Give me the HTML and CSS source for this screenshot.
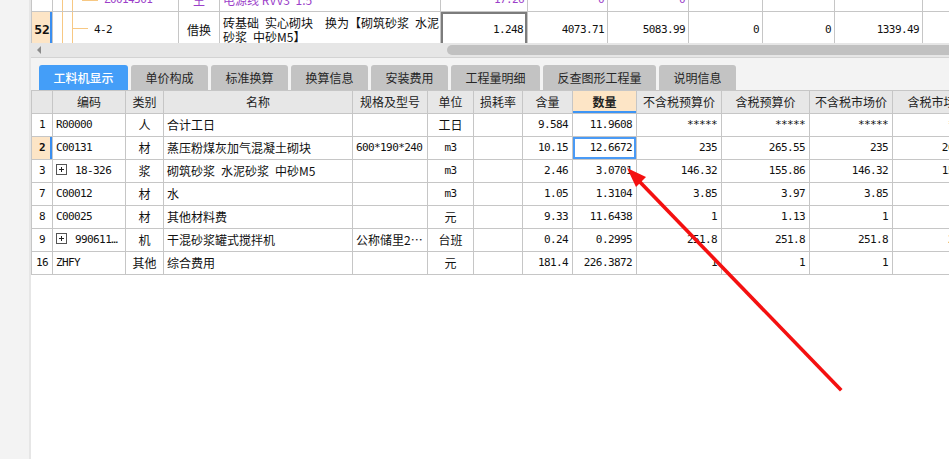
FILE: index.html
```html
<!DOCTYPE html>
<html lang="zh-CN">
<head>
<meta charset="utf-8">
<title>工料机显示</title>
<link rel="stylesheet" href="styles.css">
</head>
<body>
<div class="gutter"></div>
<div class="main">
  <div class="upper">
    <table class="utable">
      <colgroup>
        <col class="w22"><col class="w126"><col class="w41"><col class="w221"><col class="w87"><col class="w80"><col class="w81"><col class="w74"><col class="w72"><col class="w88"><col class="w60">
      </colgroup>
      <tr class="row-a">
        <td class="rn"></td>
        <td class="tree tree-a mono">Z0014301</td>
        <td class="c">主</td>
        <td class="l">电源线 RVV3*1.5</td>
        <td class="r mono">17.26</td>
        <td class="r mono">0</td>
        <td class="r mono">0</td>
        <td></td><td></td><td></td><td></td>
      </tr>
      <tr class="row-b">
        <td class="rn cur">52</td>
        <td class="tree tree-b mono">4-2</td>
        <td class="c">借换</td>
        <td class="l name2"><div class="nl">砖基础&ensp;实心砌块&ensp;&ensp;换为【砌筑砂浆&ensp;水泥</div><div class="nl">砂浆&ensp;中砂M5】</div></td>
        <td class="r mono edit">1.248</td>
        <td class="r mono">4073.71</td>
        <td class="r mono">5083.99</td>
        <td class="r mono">0</td>
        <td class="r mono">0</td>
        <td class="r mono">1339.49</td>
        <td></td>
      </tr>
    </table>
  </div>
  <div class="hscroll">
    <span class="sarrow"></span>
    <span class="thumb"></span>
  </div>
  <div class="tabbar">
    <div class="tab active">工料机显示</div>
    <div class="tab">单价构成</div>
    <div class="tab">标准换算</div>
    <div class="tab">换算信息</div>
    <div class="tab">安装费用</div>
    <div class="tab">工程量明细</div>
    <div class="tab">反查图形工程量</div>
    <div class="tab">说明信息</div>
  </div>
  <div class="gridwrap">
    <table class="grid">
      <colgroup>
        <col class="w22"><col class="w73"><col class="w38"><col class="w189"><col class="w75"><col class="w46"><col class="w49"><col class="w50"><col class="w64"><col class="w85"><col class="w88"><col class="w84"><col class="w90">
      </colgroup>
      <tr class="head">
        <th class="rn"></th>
        <th>编码</th>
        <th>类别</th>
        <th>名称</th>
        <th>规格及型号</th>
        <th>单位</th>
        <th>损耗率</th>
        <th>含量</th>
        <th class="hl">数量</th>
        <th>不含税预算价</th>
        <th>含税预算价</th>
        <th>不含税市场价</th>
        <th>含税市场价</th>
      </tr>
      <tr>
        <td class="rn mono">1</td><td class="mono l">R00000</td><td class="c">人</td><td class="l">合计工日</td><td></td><td class="c">工日</td><td></td>
        <td class="r mono">9.584</td><td class="r mono">11.9608</td><td class="r mono">*****</td><td class="r mono">*****</td><td class="r mono">*****</td><td class="r mono">*****</td>
      </tr>
      <tr>
        <td class="rn cur mono">2</td><td class="mono l">C00131</td><td class="c">材</td><td class="l">蒸压粉煤灰加气混凝土砌块</td><td class="mono l">600*190*240</td><td class="c mono">m3</td><td></td>
        <td class="r mono">10.15</td><td class="r mono sel">12.6672</td><td class="r mono">235</td><td class="r mono">265.55</td><td class="r mono">235</td><td class="r mono">265.55</td>
      </tr>
      <tr>
        <td class="rn mono">3</td><td class="mono l"><svg class="exp" width="11" height="11" viewBox="0 0 11 11"><rect x="0.5" y="0.5" width="10" height="10" fill="#fff" stroke="#555"/><path d="M3 5.5H8M5.5 3V8" stroke="#222"/></svg> 18-326</td><td class="c">浆</td><td class="l">砌筑砂浆&ensp;水泥砂浆&ensp;中砂M5</td><td></td><td class="c mono">m3</td><td></td>
        <td class="r mono">2.46</td><td class="r mono">3.0701</td><td class="r mono">146.32</td><td class="r mono">155.86</td><td class="r mono">146.32</td><td class="r mono">155.86</td>
      </tr>
      <tr>
        <td class="rn mono">7</td><td class="mono l">C00012</td><td class="c">材</td><td class="l">水</td><td></td><td class="c mono">m3</td><td></td>
        <td class="r mono">1.05</td><td class="r mono">1.3104</td><td class="r mono">3.85</td><td class="r mono">3.97</td><td class="r mono">3.85</td><td class="r mono">3.97</td>
      </tr>
      <tr>
        <td class="rn mono">8</td><td class="mono l">C00025</td><td class="c">材</td><td class="l">其他材料费</td><td></td><td class="c">元</td><td></td>
        <td class="r mono">9.33</td><td class="r mono">11.6438</td><td class="r mono">1</td><td class="r mono">1.13</td><td class="r mono">1</td><td class="r mono">1.13</td>
      </tr>
      <tr>
        <td class="rn mono">9</td><td class="mono l"><svg class="exp" width="11" height="11" viewBox="0 0 11 11"><rect x="0.5" y="0.5" width="10" height="10" fill="#fff" stroke="#555"/><path d="M3 5.5H8M5.5 3V8" stroke="#222"/></svg> 990611…</td><td class="c">机</td><td class="l">干混砂浆罐式搅拌机</td><td class="l">公称储里2…</td><td class="c">台班</td><td></td>
        <td class="r mono">0.24</td><td class="r mono">0.2995</td><td class="r mono">251.8</td><td class="r mono">251.8</td><td class="r mono">251.8</td><td class="r mono">251.8</td>
      </tr>
      <tr>
        <td class="rn mono">16</td><td class="mono l">ZHFY</td><td class="c">其他</td><td class="l">综合费用</td><td></td><td class="c">元</td><td></td>
        <td class="r mono">181.4</td><td class="r mono">226.3872</td><td class="r mono">1</td><td class="r mono">1</td><td class="r mono">1</td><td class="r mono">1</td>
      </tr>
    </table>
  </div>
</div>
<svg class="arrow" width="949" height="459" viewBox="0 0 949 459">
  <line x1="639" y1="181" x2="840" y2="389" stroke="#f41010" stroke-width="3.6" stroke-linecap="square"/>
  <polygon points="627,168 646,177 636,187" fill="#f41010"/>
</svg>
</body>
</html>
```
FILE: styles.css
```css
html, body {
  margin: 0;
  padding: 0;
}
body {
  width: 949px;
  height: 459px;
  overflow: hidden;
  display: flex;
  position: relative;
  background: #fff;
  font-family: "Noto Sans CJK SC", "Noto Sans", sans-serif;
  font-size: 12px;
  color: #111;
}
.gutter {
  width: 29px;
  flex: none;
  background: #f3f3f3;
  border-right: 2px solid #e6e6e6;
}
.main {
  flex: 1;
  min-width: 0;
  overflow: hidden;
  display: flex;
  flex-direction: column;
}

/* shared table */
table {
  border-collapse: separate;
  border-spacing: 0;
  table-layout: fixed;
}
td, th {
  padding: 0 3px;
  border-right: 1px solid #c6c6c6;
  border-bottom: 1px solid #c6c6c6;
  white-space: nowrap;
  overflow: hidden;
  box-sizing: border-box;
  line-height: 14px;
}
td.rn, th.rn { border-left: 1px solid #c6c6c6; text-align: center; padding: 0; }
.c { text-align: center; }
.l { text-align: left; }
.r { text-align: right; }
.mono {
  font-family: "DejaVu Sans Mono", "Liberation Mono", monospace;
  font-size: 11px;
  letter-spacing: -0.6px;
}

.w22 { width: 22px; } .w126 { width: 126px; } .w41 { width: 41px; } .w221 { width: 221px; }
.w87 { width: 87px; } .w80 { width: 80px; } .w81 { width: 81px; } .w74 { width: 74px; }
.w72 { width: 72px; } .w88 { width: 88px; } .w60 { width: 60px; } .w73 { width: 73px; }
.w38 { width: 38px; } .w189 { width: 189px; } .w75 { width: 75px; } .w46 { width: 46px; }
.w49 { width: 49px; } .w50 { width: 50px; } .w64 { width: 64px; } .w85 { width: 85px; }
.w90 { width: 90px; }

/* upper (previous rows) */
.upper {
  height: 43px;
  overflow: hidden;
  flex: none;
}
.utable {
  width: 952px;
  margin-top: -12px;
}
.row-a { height: 24px; }
.row-a td { color: #9c3fc9; }
.row-b { height: 36px; }
.rn.cur {
  background: #fde5c6;
  font-weight: bold;
  box-shadow: inset -2px 0 0 #3a8ef0;
  color: #111;
}
.row-b .rn.cur { font-family: "DejaVu Sans Mono", monospace; font-size: 13px; letter-spacing: 0; }
.tree-b {
  padding-left: 41px;
  background:
    linear-gradient(#f7c883, #f7c883) 9px 0 / 1px 100% no-repeat,
    linear-gradient(#f7c883, #f7c883) 19px 0 / 1px 100% no-repeat,
    linear-gradient(#f7c883, #f7c883) 19px 16px / 16px 1px no-repeat;
}
.tree-a {
  padding-left: 51px;
  background:
    linear-gradient(#f7c883, #f7c883) 9px 0 / 1px 100% no-repeat,
    linear-gradient(#f7c883, #f7c883) 19px 0 / 1px 100% no-repeat,
    linear-gradient(#f7c883, #f7c883) 29px 12px / 16px 1px no-repeat;
}
.name2 { vertical-align: middle; padding-top: 1px; }
.nl { height: 14px; line-height: 14px; overflow: visible; }
.edit {
  box-shadow: inset 2px 2px 0 #7c7c7c, inset -2px 0 0 #7c7c7c;
  padding-right: 4px;
}

/* horizontal scrollbar */
.hscroll {
  flex: none;
  height: 14px;
  background: #e6e6e6;
  border-bottom: 1px solid #d3d3d3;
  display: flex;
  align-items: center;
}
.sarrow {
  margin-left: 6px;
  width: 0;
  height: 0;
  border-top: 4px solid transparent;
  border-bottom: 4px solid transparent;
  border-right: 4px solid #8a8a8a;
}
.thumb {
  margin-left: auto;
  margin-right: -12px;
  width: 514px;
  height: 10px;
  border-radius: 5px;
  background: #c1c1c1;
}

/* tabs */
.tabbar {
  flex: none;
  height: 32px;
  box-sizing: border-box;
  background: #f3f3f3;
  display: flex;
  align-items: flex-end;
  gap: 3px;
  padding-left: 8px;
}
.tab {
  height: 25px;
  padding: 0 14.5px;
  display: flex;
  align-items: center;
  justify-content: center;
  background: #c3c3c3;
  color: #262626;
  border-radius: 3px 3px 0 0;
  font-size: 12px;
}
.tab.active {
  background: #449ef8;
  color: #fff;
  font-weight: 500;
}

/* main grid */
.gridwrap {
  flex: 1;
  overflow: hidden;
}
.grid {
  width: 952px;
  border-top: 1px solid #c6c6c6;
}
.grid tr { height: 23px; }
.grid th {
  background: #e7e7e7;
  font-weight: normal;
  color: #222;
  text-align: center;
  height: 22px;
}
.grid th.hl {
  background: #fde5c6;
  font-weight: bold;
  box-shadow: inset 0 -2px 0 #3d95f5;
}
.grid td { color: #111; }
.grid td.r { padding-right: 4px; }
.sel { box-shadow: inset 0 0 0 2px #4a9af5; }
.exp { vertical-align: -1px; margin-right: 2px; }

/* annotation overlay */
.arrow {
  position: absolute;
  left: 0;
  top: 0;
  pointer-events: none;
}
```
